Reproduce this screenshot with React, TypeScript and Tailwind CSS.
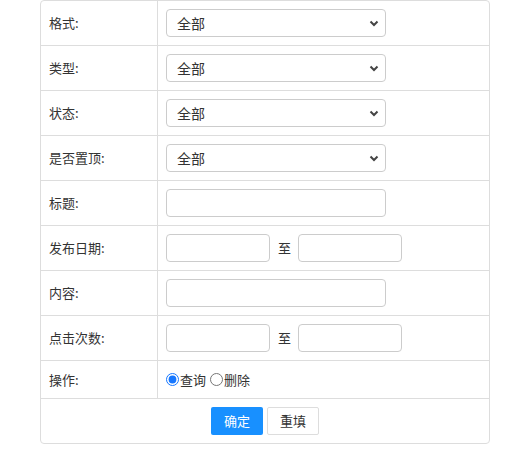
import React from "react";

const font = { fontFamily: '"Noto Sans CJK SC", "Noto Sans", sans-serif' };

function Chevron() {
    return (
        <svg
            className="pointer-events-none absolute right-[6px] top-1/2 -translate-y-1/2"
            width="12"
            height="12"
            viewBox="0 0 12 12"
        >
            <path d="M2.5 4.5 L6 8 L9.5 4.5" fill="none" stroke="#444" strokeWidth="2" />
        </svg>
    );
}

function Select() {
    return (
        <div className="relative w-[220px]">
            <select className="h-[28px] w-full appearance-none rounded-[4px] border border-[#ccc] bg-white pl-[10px] text-[14px] text-[#333] outline-none">
                <option>全部</option>
            </select>
            <Chevron />
        </div>
    );
}

function TextInput({ wide }: { wide?: boolean }) {
    return (
        <input
            type="text"
            className={
                wide
                    ? "h-[28px] w-[220px] rounded-[4px] border border-[#ccc] bg-white outline-none"
                    : "h-[28px] w-[104px] rounded-[4px] border border-[#ccc] bg-white outline-none"
            }
        />
    );
}

function Range() {
    return (
        <div className="flex items-center">
            <TextInput />
            <span className="ml-[8px] mr-[7px] text-[13px] text-[#333]">至</span>
            <TextInput />
        </div>
    );
}

function Row({ label, children, short }: { label: string; children: React.ReactNode; short?: boolean }) {
    return (
        <div className={short ? "flex h-[38px] border-b border-[#ddd]" : "flex h-[45px] border-b border-[#ddd]"}>
            <div className="flex w-[117px] items-center border-r border-[#ddd] pl-[8px] text-[13px] text-[#333]">
                {label}
            </div>
            <div className="flex flex-1 items-center pl-[8px]">{children}</div>
        </div>
    );
}

export default function App() {
    return (
        <div className="bg-white" style={font}>
            <div className="ml-[40px] w-[450px] overflow-hidden rounded-[4px] border border-[#ddd]">
                <Row label="格式:"><Select /></Row>
                <Row label="类型:"><Select /></Row>
                <Row label="状态:"><Select /></Row>
                <Row label="是否置顶:"><Select /></Row>
                <Row label="标题:"><TextInput wide /></Row>
                <Row label="发布日期:"><Range /></Row>
                <Row label="内容:"><TextInput wide /></Row>
                <Row label="点击次数:"><Range /></Row>
                <Row label="操作:" short>
                    <label className="flex items-center text-[13px] text-[#333]">
                        <input type="radio" name="op" defaultChecked className="m-0 h-[13px] w-[13px] accent-[#1677ff]" />
                        <span className="ml-[1px]">查询</span>
                    </label>
                    <label className="ml-[4px] flex items-center text-[13px] text-[#333]">
                        <input type="radio" name="op" className="m-0 h-[13px] w-[13px]" />
                        <span className="ml-[1px]">删除</span>
                    </label>
                </Row>
                <div className="flex h-[44px] items-center justify-center gap-[4px]">
                    <button className="h-[28px] w-[52px] rounded-[2px] bg-[#1890ff] text-[13px] text-white">确定</button>
                    <button className="h-[28px] w-[52px] rounded-[2px] border border-[#ddd] bg-white text-[13px] text-[#333]">重填</button>
                </div>
            </div>
        </div>
    );
}
